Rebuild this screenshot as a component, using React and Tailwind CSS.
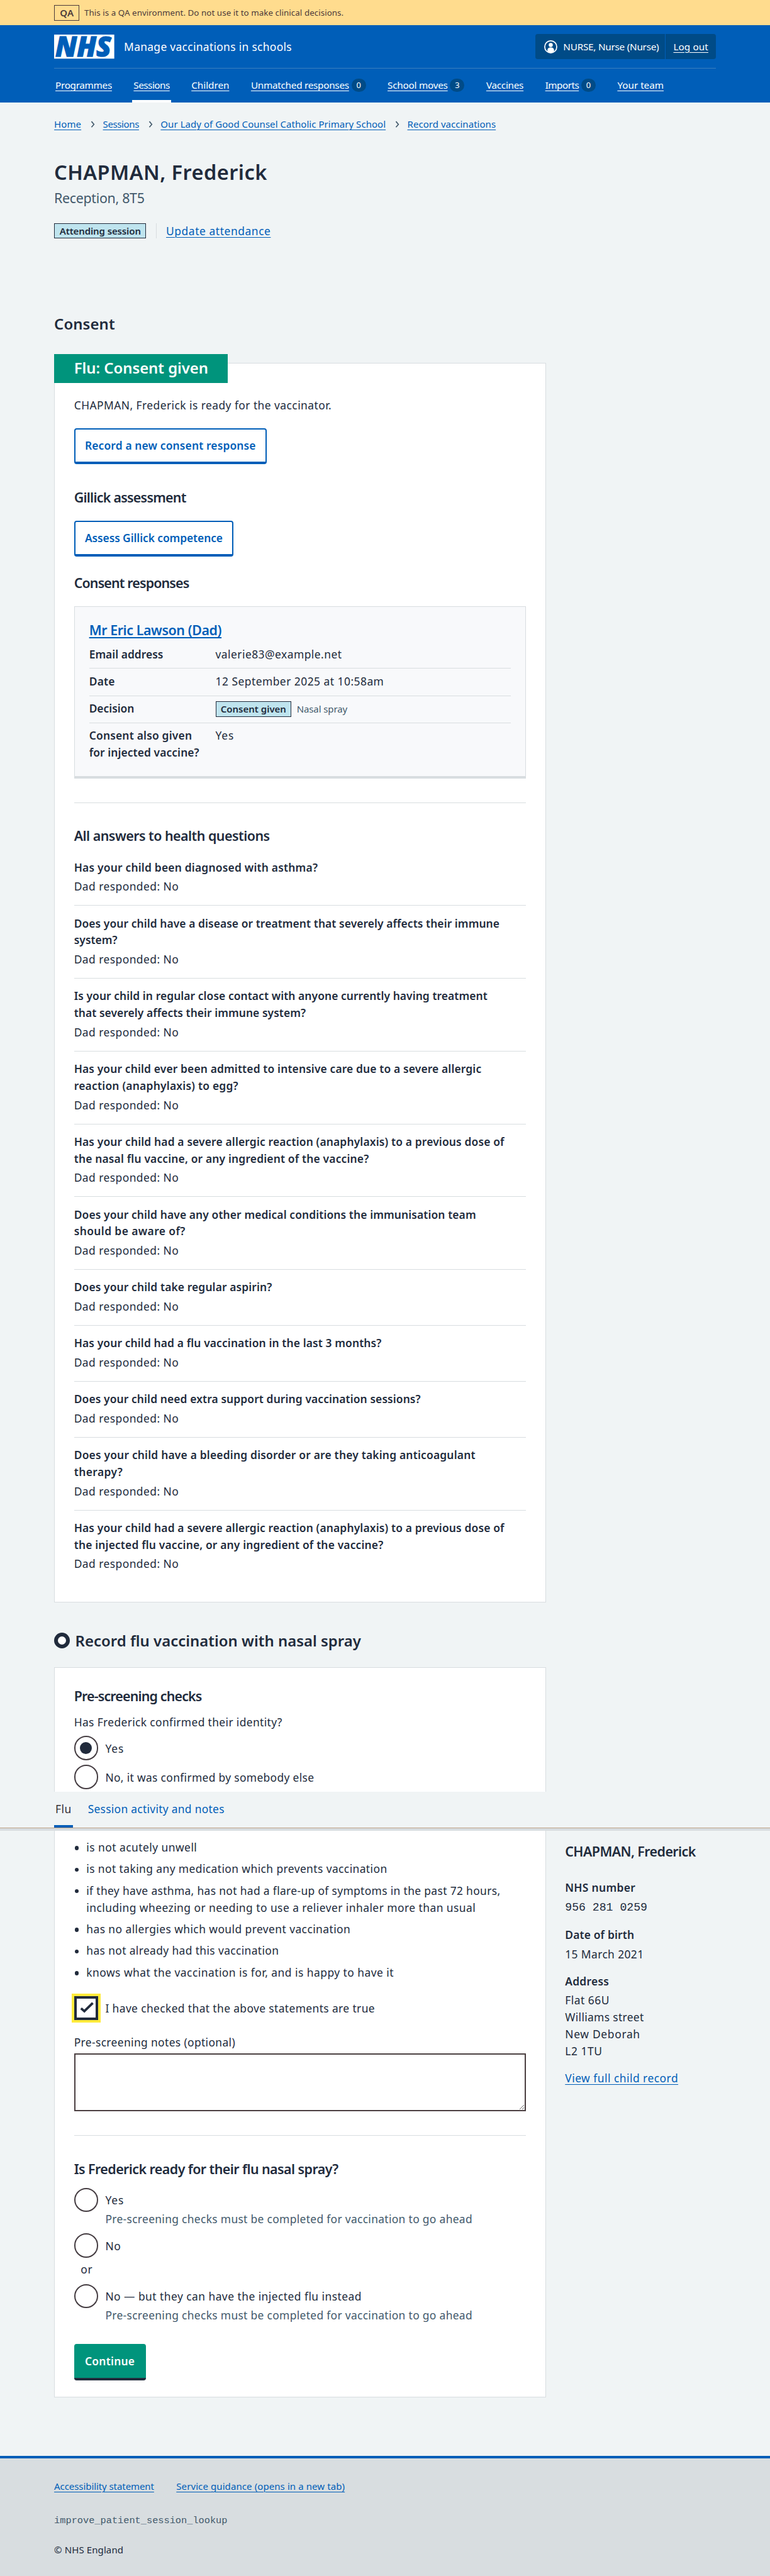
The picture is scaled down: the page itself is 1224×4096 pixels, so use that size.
import React, { useLayoutEffect, useRef, useState } from "react";

const PAGE_WIDTH = 1280;

/* A single run of text whose tracking is adjusted so that it is `w` pixels wide. */
function Fit({ w, className = "", children }) {
  const ref = useRef(null);
  const [spacing, setSpacing] = useState(0);
  useLayoutEffect(() => {
    const el = ref.current;
    const page = el.closest("[data-page]");
    const scale = page.getBoundingClientRect().width / PAGE_WIDTH;
    const natural = el.getBoundingClientRect().width / scale;
    setSpacing((w - natural) / el.textContent.length);
  }, []);
  return (
    <span
      ref={ref}
      className={`inline-block whitespace-nowrap ${className}`}
      style={{ letterSpacing: `${spacing}px` }}
    >
      {children}
    </span>
  );
}

const body = "block text-[18.2px] leading-[27px] pb-[1px]";
const small = "block text-[15.7px] leading-[24px]";
const h3 = "block text-[22.4px] leading-[31px] -mb-px font-semibold";
const h2 = "block text-[25px] leading-[35px] -mb-px font-semibold";
const link = "text-[#005eb8] underline decoration-1 underline-offset-[3px]";

const navItems = [
  { label: "Programmes", w: 94 },
  { label: "Sessions", w: 60, active: true },
  { label: "Children", w: 63 },
  { label: "Unmatched responses", w: 163, count: 0 },
  { label: "School moves", w: 100, count: 3 },
  { label: "Vaccines", w: 62 },
  { label: "Imports", w: 56, count: 0 },
  { label: "Your team", w: 77 },
];

const crumbs = [
  ["Home", 45],
  ["Sessions", 60],
  ["Our Lady of Good Counsel Catholic Primary School", 374],
  ["Record vaccinations", 147],
];

const questions = [
  [["Has your child been diagnosed with asthma?", 405]],
  [["Does your child have a disease or treatment that severely affects their immune", 707], ["system?", 72]],
  [["Is your child in regular close contact with anyone currently having treatment", 687], ["that severely affects their immune system?", 385]],
  [["Has your child ever been admitted to intensive care due to a severe allergic", 677], ["reaction (anaphylaxis) to egg?", 273]],
  [["Has your child had a severe allergic reaction (anaphylaxis) to a previous dose of", 715], ["the nasal flu vaccine, or any ingredient of the vaccine?", 490]],
  [["Does your child have any other medical conditions the immunisation team", 668], ["should be aware of?", 185]],
  [["Does your child take regular aspirin?", 329]],
  [["Has your child had a flu vaccination in the last 3 months?", 511]],
  [["Does your child need extra support during vaccination sessions?", 576]],
  [["Does your child have a bleeding disorder or are they taking anticoagulant", 667], ["therapy?", 81]],
  [["Has your child had a severe allergic reaction (anaphylaxis) to a previous dose of", 715], ["the injected flu vaccine, or any ingredient of the vaccine?", 514]],
];

const statements = [
  [["is not acutely unwell", 184]],
  [["is not taking any medication which prevents vaccination", 500]],
  [["if they have asthma, has not had a flare-up of symptoms in the past 72 hours,", 688], ["including wheezing or needing to use a reliever inhaler more than usual", 647]],
  [["has no allergies which would prevent vaccination", 439]],
  [["has not already had this vaccination", 320]],
  [["knows what the vaccination is for, and is happy to have it", 511]],
];

function Tag({ w, textW, children }) {
  return (
    <span className={`flex h-[26px] items-center justify-center border border-[#212b3c] bg-[#bfe4ee] text-[15.7px] leading-[24px] font-semibold ${w}`}>
      <Fit w={textW}>{children}</Fit>
    </span>
  );
}

function OutlineButton({ w, textW, children }) {
  return (
    <button className={`flex h-[60px] items-center justify-center rounded-[4px] border-[2.1px] border-b-[4.2px] border-[#005eb8] bg-white text-[18.2px] leading-[26px] font-semibold text-[#005eb8] ${w}`}>
      <Fit w={textW}>{children}</Fit>
    </button>
  );
}

function Radio({ checked, w, children }) {
  return (
    <div className="flex h-[40px] gap-[12px]">
      <span className="flex h-[40px] w-[40px] shrink-0 items-center justify-center rounded-full border-[2.1px] border-[#453d42] bg-white">
        {checked && <span className="h-[20px] w-[20px] rounded-full bg-[#212b3c]" />}
      </span>
      <span className={`${body} mt-[8px]`}>
        <Fit w={w}>{children}</Fit>
      </span>
    </div>
  );
}

function Hint() {
  return (
    <p className={`${body} -mt-px ml-[52px] text-[#42596b]`}>
      <Fit w={610}>Pre-screening checks must be completed for vaccination to go ahead</Fit>
    </p>
  );
}

function SummaryRow({ label, last, children }) {
  return (
    <div className={`flex pb-[8px] ${last ? "" : "mb-[8px] border-b border-[#d8dde0]"}`}>
      <dt className="w-[210px] shrink-0 font-semibold">
        {label.map(([t, w]) => (
          <span key={t} className={body}>
            <Fit w={w}>{t}</Fit>
          </span>
        ))}
      </dt>
      <dd className="h-[28px]">{children}</dd>
    </div>
  );
}

function Header() {
  return (
    <header className="h-[128px] bg-[#005eb8] px-[90px] text-white">
      <div className="flex h-[72px] items-center border-b border-[#3a7fc0]">
        <svg viewBox="0 0 100 40" className="h-[40px] w-[100px] overflow-visible">
          <rect width="100" height="40" fill="#fff" />
          <text
            x="2"
            y="36.3"
            fill="#005eb8"
            stroke="#005eb8"
            strokeWidth="1.2"
            fontFamily="Noto Sans, sans-serif"
            fontStyle="italic"
            fontWeight="900"
            fontSize="45.5"
            textLength="93"
            lengthAdjust="spacingAndGlyphs"
          >
            NHS
          </text>
        </svg>
        <span className="ml-[16px] text-[18.2px] leading-[26px]">
          <Fit w={279}>Manage vaccinations in schools</Fit>
        </span>
        <div className="ml-auto flex h-[42px] w-[300px] rounded-[4px] bg-[#004b87] text-[16px] leading-[24px]">
          <div className="flex w-[216px] items-center border-r border-[#005eb8] pl-[13px]">
            <svg viewBox="0 0 24 24" className="h-[24px] w-[24px]">
              <circle cx="12" cy="12" r="10" fill="none" stroke="#fff" strokeWidth="1.8" />
              <circle cx="12" cy="8.8" r="3.4" fill="#fff" />
              <path d="M6.5 19.6v-2.2a4.4 4.4 0 0 1 4.4-4.4h2.2a4.4 4.4 0 0 1 4.4 4.4v2.2A10 10 0 0 1 12 21.6a10 10 0 0 1-5.5-2z" fill="#fff" />
            </svg>
            <Fit w={159} className="ml-[9px]">NURSE, Nurse (Nurse)</Fit>
          </div>
          <div className="flex flex-1 items-center justify-center">
            <Fit w={58} className="underline underline-offset-[3px]">Log out</Fit>
          </div>
        </div>
      </div>
      <nav className="flex h-[56px] gap-[36px] pl-[2px] text-[16px] leading-[24px]">
        {navItems.map((item) => (
          <div
            key={item.label}
            className={`-mx-[2px] flex items-center gap-[4px] border-b-[4.2px] px-[2px] pt-[4px] ${item.active ? "border-white" : "border-transparent"}`}
          >
            <Fit w={item.w} className="underline underline-offset-[3px]">{item.label}</Fit>
            {item.count !== undefined && (
              <span className="flex h-[22px] w-[24px] items-center justify-center rounded-full bg-[#004b87] text-[13.5px] leading-[20px]">
                {item.count}
              </span>
            )}
          </div>
        ))}
      </nav>
    </header>
  );
}

function Consent() {
  return (
    <section className="mt-[48.7px] h-[2060px] w-[817px] border border-[#d8dde0] bg-white px-[32px]">
      <h2 className="-mt-[16px] -ml-[33px] flex h-[48px] w-[288px] items-center bg-[#00947c] pl-[33px] text-[25px] leading-[34px] font-semibold text-white">
        <Fit w={223}>Flu: Consent given</Fit>
      </h2>
      <p className={`${body} mt-[24px]`}>
        <Fit w={428}>CHAPMAN, Frederick is ready for the vaccinator.</Fit>
      </p>
      <div className="mt-[23.5px]">
        <OutlineButton w="w-[320px]" textW={284}>Record a new consent response</OutlineButton>
      </div>
      <h3 className={`${h3} mt-[39.3px]`}>
        <Fit w={186}>Gillick assessment</Fit>
      </h3>
      <div className="mt-[24.7px]">
        <OutlineButton w="w-[265px]" textW={229}>Assess Gillick competence</OutlineButton>
      </div>
      <h3 className={`${h3} mt-[27.3px]`}>
        <Fit w={191}>Consent responses</Fit>
      </h3>
      <div className="mt-[24.7px] h-[286px] border border-b-[4.2px] border-[#d8dde0] bg-[#f8f9fb] px-[24px] pt-[23.3px]">
        <h4 className={h3}>
          <Fit w={220} className="text-[#005eb8] underline decoration-2 underline-offset-[3px]">Mr Eric Lawson (Dad)</Fit>
        </h4>
        <dl className="mt-[12.7px]">
          <SummaryRow label={[["Email address", 123]]}>
            <span className={body}><Fit w={210}>valerie83@example.net</Fit></span>
          </SummaryRow>
          <SummaryRow label={[["Date", 43]]}>
            <span className={body}><Fit w={280}>12 September 2025 at 10:58am</Fit></span>
          </SummaryRow>
          <SummaryRow label={[["Decision", 75]]}>
            <div className="mt-px flex items-center gap-[9px]">
              <Tag w="w-[126px]" textW={109}>Consent given</Tag>
              <span className={`${small} text-[#42596b]`}><Fit w={84}>Nasal spray</Fit></span>
            </div>
          </SummaryRow>
          <SummaryRow last label={[["Consent also given", 171], ["for injected vaccine?", 183]]}>
            <span className={body}><Fit w={31}>Yes</Fit></span>
          </SummaryRow>
        </dl>
      </div>
      <hr className="mt-[40px] border-t border-[#d8dde0]" />
      <h3 className={`${h3} mt-[39.3px]`}>
        <Fit w={325}>All answers to health questions</Fit>
      </h3>
      <dl className="mt-[24.7px]">
        {questions.map((lines, i) => (
          <div key={i} className={i < questions.length - 1 ? "mb-[16px] border-b border-[#d8dde0] pb-[16px]" : ""}>
            <dt className="font-semibold">
              {lines.map(([t, w]) => (
                <span key={t} className={body}><Fit w={w}>{t}</Fit></span>
              ))}
            </dt>
            <dd className={`${body} mt-[4px]`}><Fit w={174}>Dad responded: No</Fit></dd>
          </div>
        ))}
      </dl>
    </section>
  );
}

function Sidebar() {
  return (
    <aside className="ml-[32px] pt-[18.3px]">
      <h3 className={h3}><Fit w={217}>CHAPMAN, Frederick</Fit></h3>
      <p className={`${body} mt-[32.7px] font-semibold`}><Fit w={117}>NHS number</Fit></p>
      <p className="mt-[5px] font-['Liberation_Mono',monospace] text-[19px] leading-[28px]">956 281 0259</p>
      <p className={`${body} mt-[18px] font-semibold`}><Fit w={115}>Date of birth</Fit></p>
      <p className={`${body} mt-[4px]`}><Fit w={131}>15 March 2021</Fit></p>
      <p className={`${body} mt-[17px] font-semibold`}><Fit w={73}>Address</Fit></p>
      <p className={`${body} mt-[4px]`}><Fit w={74}>Flat 66U</Fit></p>
      <p className={body}><Fit w={131}>Williams street</Fit></p>
      <p className={body}><Fit w={125}>New Deborah</Fit></p>
      <p className={body}><Fit w={62}>L2 1TU</Fit></p>
      <p className={`${body} mt-[17px]`}><Fit w={188} className={link}>View full child record</Fit></p>
    </aside>
  );
}

export default function App() {
  return (
    <div className="overflow-hidden">
      <div
        data-page
        className="flex h-[4281.9px] w-[1280px] flex-col overflow-hidden bg-[#f0f4f5] font-['Noto_Sans',sans-serif] text-[#212b3c] [zoom:0.9566]"
      >
        <div className="flex h-[42px] shrink-0 items-center bg-[#ffdc8e] pl-[90px] text-[#4b3a3a]">
          <span className="flex h-[26px] w-[42px] items-center justify-center border border-[#4b3a3a] text-[15.7px] leading-[24px] font-semibold">
            <Fit w={23}>QA</Fit>
          </span>
          <span className="ml-[8px] text-[14px] leading-[20px]">
            <Fit w={431}>This is a QA environment. Do not use it to make clinical decisions.</Fit>
          </span>
        </div>
        <Header />

        <div className="mt-[24.5px] pl-[90px]">
          <nav className="flex items-center text-[15.7px] leading-[24px]">
            {crumbs.map(([t, w], i) => (
              <React.Fragment key={t}>
                {i > 0 && (
                  <svg viewBox="0 0 8 12" className="mr-[12.5px] ml-[15.5px] h-[12px] w-[8px]">
                    <path d="M1.5 1.2 5.6 6 1.5 10.8" fill="none" stroke="#42596b" strokeWidth="1.7" />
                  </svg>
                )}
                <Fit w={w} className={link}>{t}</Fit>
              </React.Fragment>
            ))}
          </nav>
          <h1 className="mt-[45px] text-[34px] leading-[46px] font-semibold">
            <Fit w={354}>CHAPMAN, Frederick</Fit>
          </h1>
          <p className="mt-[5px] text-[22.4px] leading-[30px] text-[#42596b]">
            <Fit w={150}>Reception, 8T5</Fit>
          </p>
          <div className="mt-[26.2px] flex h-[26px] items-center">
            <Tag w="w-[153px]" textW={135}>Attending session</Tag>
            <span className="ml-[16px] h-[26px] w-px bg-[#d8dde0]" />
            <span className="ml-[16px] text-[18.2px] leading-[26px]">
              <Fit w={174} className={link}>Update attendance</Fit>
            </span>
          </div>
          <h2 className={`${h2} mt-[123.8px]`}><Fit w={101}>Consent</Fit></h2>
          <Consent />

          <h2 className={`${h2} mt-[46.3px]`}>
            <span className="flex items-center gap-[9px]">
              <span className="h-[26px] w-[26px] rounded-full border-[6.3px] border-[#212b3c] bg-white" />
              <Fit w={475}>Record flu vaccination with nasal spray</Fit>
            </span>
          </h2>
          <section className="mt-[27.7px] h-[207px] w-[817px] border border-b-0 border-[#d8dde0] bg-white px-[32px] pt-[31.3px]">
            <h3 className={h3}><Fit w={212}>Pre-screening checks</Fit></h3>
            <p className={`${body} mt-[16.2px]`}><Fit w={346}>Has Frederick confirmed their identity?</Fit></p>
            <div className="mt-[8px] flex flex-col gap-[8px]">
              <Radio checked w={31}>Yes</Radio>
              <Radio w={347}>No, it was confirmed by somebody else</Radio>
            </div>
          </section>
        </div>

        <nav className="flex h-[60px] pl-[90px]">
          <div className="flex w-[31px] justify-center border-b-[4.2px] border-[#005eb8] pt-[15.5px]">
            <span className={`${body} text-[#353036]`}><Fit w={27}>Flu</Fit></span>
          </div>
          <span className={`${body} mt-[15.5px] ml-[25px] text-[#005eb8]`}>
            <Fit w={227}>Session activity and notes</Fit>
          </span>
        </nav>
        <div className="h-[5px] border-t-[1.1px] border-[#bfa286] bg-[#d8dde0]" />

        <div className="flex pl-[90px]">
          <section className="h-[942px] w-[817px] border border-t-0 border-[#d8dde0] bg-white px-[32px] pt-[14.5px]">
            <ul className="flex flex-col gap-[8px]">
              {statements.map((lines, i) => (
                <li key={i} className="flex">
                  <span className="mt-[11px] mr-[13px] ml-[1px] h-[6.5px] w-[6.5px] rounded-full bg-[#212b3c]" />
                  <span>
                    {lines.map(([t, w]) => (
                      <span key={t} className={body}><Fit w={w}>{t}</Fit></span>
                    ))}
                  </span>
                </li>
              ))}
            </ul>
            <div className="mt-[24px] flex h-[40px] gap-[12px]">
              <span className="flex h-[40px] w-[40px] shrink-0 items-center justify-center border-[4.2px] border-[#212b3c] bg-white shadow-[0_0_0_4.2px_#ffeb3b]">
                <svg viewBox="0 0 32 32" className="h-[32px] w-[32px]">
                  <path d="M7.2 17.2 12.8 22 27 8.2" fill="none" stroke="#212b3c" strokeWidth="4" />
                </svg>
              </span>
              <span className={`${body} mt-[8px]`}>
                <Fit w={448}>I have checked that the above statements are true</Fit>
              </span>
            </div>
            <p className={`${body} mt-[24px]`}><Fit w={268}>Pre-screening notes (optional)</Fit></p>
            <textarea className="mt-[4px] block h-[96px] w-full resize border-[2.1px] border-[#4b3f41] bg-white" />
            <hr className="mt-[40px] border-t border-[#d8dde0]" />
            <h3 className={`${h3} mt-[39.3px]`}><Fit w={439}>Is Frederick ready for their flu nasal spray?</Fit></h3>
            <div className="mt-[16.7px]">
              <Radio w={31}>Yes</Radio>
              <Hint />
              <div className="mt-[9px]"><Radio w={26}>No</Radio></div>
              <p className={`${body} mt-[7px] ml-[11px]`}><Fit w={20}>or</Fit></p>
              <div className="mt-[9px]"><Radio w={426}>No — but they can have the injected flu instead</Radio></div>
              <Hint />
            </div>
            <button className="mt-[33px] flex h-[60px] w-[119px] items-center justify-center rounded-[4px] border-b-[4.2px] border-[#212b3c] bg-[#00947c] text-[18.2px] leading-[26px] font-semibold text-white">
              <Fit w={83}>Continue</Fit>
            </button>
          </section>
          <Sidebar />
        </div>

        <footer className="mt-[97px] flex-1 border-t-[4.2px] border-[#005eb8] bg-[#d8dde0] pt-[34.5px] pl-[90px]">
          <div className={`${small} flex gap-[37px]`}>
            <Fit w={166} className={link}>Accessibility statement</Fit>
            <Fit w={280} className={link}>Service guidance (opens in a new tab)</Fit>
          </div>
          <p className="mt-[33.2px] font-['Liberation_Mono',monospace] text-[16px] leading-[24px] text-[#42596b]">
            improve_patient_session_lookup
          </p>
          <p className={`${small} mt-[24.3px]`}><Fit w={115}>© NHS England</Fit></p>
        </footer>
      </div>
    </div>
  );
}
